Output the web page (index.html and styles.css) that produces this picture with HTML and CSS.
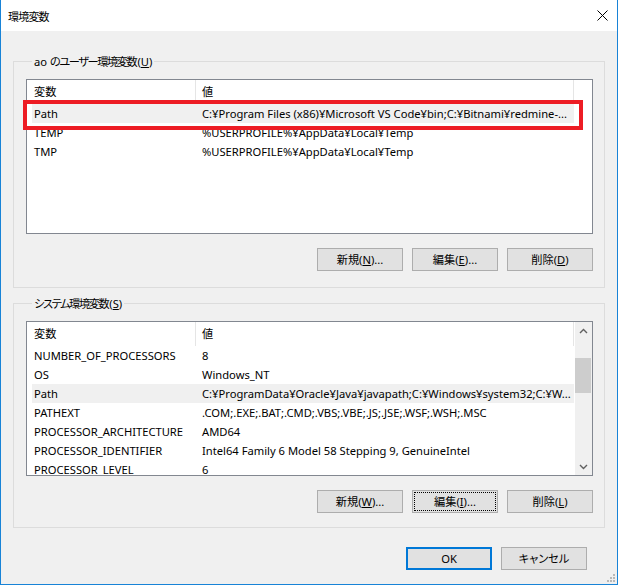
FILE: index.html
```html
<!DOCTYPE html>
<html lang="ja">
<head>
<meta charset="utf-8">
<title>環境変数</title>
<link rel="stylesheet" href="styles.css">
</head>
<body>
<div class="window">
  <div class="titlebar">
    <span class="title">環境変数</span>
    <svg class="close" width="11" height="11" viewBox="0 0 11 11"><path d="M0.5 0.5 L10.5 10.5 M10.5 0.5 L0.5 10.5" stroke="#000" stroke-width="1" fill="none"/></svg>
  </div>
  <div class="content">
    <fieldset class="group group-user">
      <legend>ao <span class="ja">のユーザー環境変数</span>(<u>U</u>)</legend>
      <div class="list">
        <div class="list-view">
          <div class="lv-head">
            <div class="hc hc-name">変数</div>
            <div class="hc hc-value">値</div>
          </div>
          <div class="lv-row selected"><div class="c1">Path</div><div class="c2">C:¥Program Files (x86)¥Microsoft VS Code¥bin;C:¥Bitnami¥redmine-...</div></div>
          <div class="lv-row"><div class="c1">TEMP</div><div class="c2">%USERPROFILE%¥AppData¥Local¥Temp</div></div>
          <div class="lv-row"><div class="c1">TMP</div><div class="c2">%USERPROFILE%¥AppData¥Local¥Temp</div></div>
        </div>
        <div class="annot"></div>
      </div>
      <div class="btn-row">
        <button class="btn">新規(<u>N</u>)...</button>
        <button class="btn">編集(<u>E</u>)...</button>
        <button class="btn">削除(<u>D</u>)</button>
      </div>
    </fieldset>

    <fieldset class="group group-system">
      <legend><span class="ja">システム環境変数</span>(<u>S</u>)</legend>
      <div class="list">
        <div class="list-view">
          <div class="lv-head">
            <div class="hc hc-name">変数</div>
            <div class="hc hc-value">値</div>
          </div>
          <div class="lv-row"><div class="c1">NUMBER_OF_PROCESSORS</div><div class="c2">8</div></div>
          <div class="lv-row"><div class="c1">OS</div><div class="c2">Windows_NT</div></div>
          <div class="lv-row selected"><div class="c1">Path</div><div class="c2">C:¥ProgramData¥Oracle¥Java¥javapath;C:¥Windows¥system32;C:¥W...</div></div>
          <div class="lv-row"><div class="c1">PATHEXT</div><div class="c2">.COM;.EXE;.BAT;.CMD;.VBS;.VBE;.JS;.JSE;.WSF;.WSH;.MSC</div></div>
          <div class="lv-row"><div class="c1">PROCESSOR_ARCHITECTURE</div><div class="c2">AMD64</div></div>
          <div class="lv-row"><div class="c1">PROCESSOR_IDENTIFIER</div><div class="c2">Intel64 Family 6 Model 58 Stepping 9, GenuineIntel</div></div>
          <div class="lv-row"><div class="c1">PROCESSOR_LEVEL</div><div class="c2">6</div></div>
        </div>
        <div class="scrollbar">
          <div class="sb-arrow">
            <svg width="9" height="6" viewBox="0 0 9 6"><path d="M1 5 L4.5 1.5 L8 5" stroke="#606060" stroke-width="1.4" fill="none"/></svg>
          </div>
          <div class="sb-thumb"></div>
          <div class="sb-arrow sb-down">
            <svg width="9" height="6" viewBox="0 0 9 6"><path d="M1 1 L4.5 4.5 L8 1" stroke="#606060" stroke-width="1.4" fill="none"/></svg>
          </div>
        </div>
      </div>
      <div class="btn-row">
        <button class="btn">新規(<u>W</u>)...</button>
        <button class="btn focused">編集(<u>I</u>)...</button>
        <button class="btn">削除(<u>L</u>)</button>
      </div>
    </fieldset>

    <div class="dialog-buttons">
      <button class="btn default">OK</button>
      <button class="btn">キャンセル</button>
    </div>
  </div>
  <svg class="grip" width="10" height="10" viewBox="0 0 10 10">
    <rect x="7" y="1" width="2" height="2" fill="#b8b8b8"/>
    <rect x="4" y="4" width="2" height="2" fill="#b8b8b8"/>
    <rect x="7" y="4" width="2" height="2" fill="#b8b8b8"/>
    <rect x="1" y="7" width="2" height="2" fill="#b8b8b8"/>
    <rect x="4" y="7" width="2" height="2" fill="#b8b8b8"/>
    <rect x="7" y="7" width="2" height="2" fill="#b8b8b8"/>
  </svg>
</div>
</body>
</html>
```

FILE: styles.css
```css
* { box-sizing: border-box; }

html, body {
  margin: 0;
  padding: 0;
  background: #f0f0f0;
}

body {
  font-family: "Noto Sans", "Noto Sans CJK JP", sans-serif;
  font-size: 11.2px;
  font-feature-settings: "palt";
  color: #000;
}

.window {
  position: relative;
  width: 618px;
  height: 585px;
  border: 1px solid #1883d7;
  border-top: none;
  background: #f0f0f0;
  display: flex;
  flex-direction: column;
}

.titlebar {
  height: 31px;
  background: #fff;
  display: flex;
  align-items: center;
  justify-content: space-between;
  padding: 0 9px 0 7px;
}

.title {
  font-family: "Noto Sans CJK JP", sans-serif;
  font-size: 11px;
  line-height: 16px;
  letter-spacing: -0.8px;
}

.close { display: block; }

.content {
  display: flex;
  flex-direction: column;
  flex: 1;
}

.group {
  margin: 0 12px;
  border: 1px solid #dcdcdc;
  padding: 9px 11px 16px 12px;
  min-width: 0;
}

.group-user { margin-top: 22px; }
.group-system { margin-top: 7px; padding-bottom: 14px; }

.group legend {
  padding: 0 2px;
  margin-left: 6px;
  line-height: 17px;
  height: 17px;
  white-space: nowrap;
}

.group legend .ja {
  letter-spacing: -1.4px;
  margin-right: 1px;
}

.list {
  position: relative;
  height: 155px;
  border: 1px solid #828790;
  background: #fff;
  display: flex;
}

.list-view {
  flex: 1;
  overflow: hidden;
  min-width: 0;
}

.lv-head {
  display: grid;
  grid-template-columns: 164px 378px;
  padding-left: 5px;
  height: 24px;
}

.hc {
  border-right: 1px solid #e5e5e5;
  line-height: 23px;
  white-space: nowrap;
}

.hc-name { padding-left: 2px; }
.hc-value { padding-left: 6px; }

.lv-row {
  display: grid;
  grid-template-columns: 164px 378px;
  margin-left: 5px;
  width: 542px;
  height: 19px;
  line-height: 19px;
  white-space: nowrap;
}

.lv-row.selected { background: #f0f0f0; }

.c1 { padding-left: 2px; overflow: hidden; }
.c2 { padding-left: 6px; overflow: hidden; }

.annot {
  position: absolute;
  left: -4px;
  top: 20px;
  width: 560px;
  height: 30px;
  border: 4px solid #ed1c24;
}

.scrollbar {
  width: 17px;
  background: #f0f0f0;
  display: flex;
  flex-direction: column;
}

.sb-arrow {
  height: 17px;
  display: flex;
  align-items: center;
  justify-content: center;
}

.sb-arrow svg { display: block; }

.sb-down { margin-top: auto; }

.sb-thumb {
  margin-top: 19px;
  width: 16px;
  height: 35px;
  background: #cdcdcd;
}

.btn-row {
  display: flex;
  justify-content: flex-end;
  gap: 9px;
  margin-top: 14px;
}

.btn {
  width: 86px;
  height: 23px;
  padding: 0;
  margin: 0;
  background: #e1e1e1;
  border: 1px solid #adadad;
  border-radius: 0;
  font-family: "Noto Sans", "Noto Sans CJK JP", sans-serif;
  font-size: 11.2px;
  font-feature-settings: "palt";
  color: #000;
  line-height: 20px;
}

.btn.focused {
  outline: 1px dotted #000;
  outline-offset: -3px;
}

.btn.default {
  border: 2px solid #0078d7;
}

.dialog-buttons {
  display: flex;
  justify-content: flex-end;
  gap: 9px;
  margin-top: 19px;
  padding-right: 30px;
}

.grip {
  position: absolute;
  right: 1px;
  bottom: 1px;
}
```
